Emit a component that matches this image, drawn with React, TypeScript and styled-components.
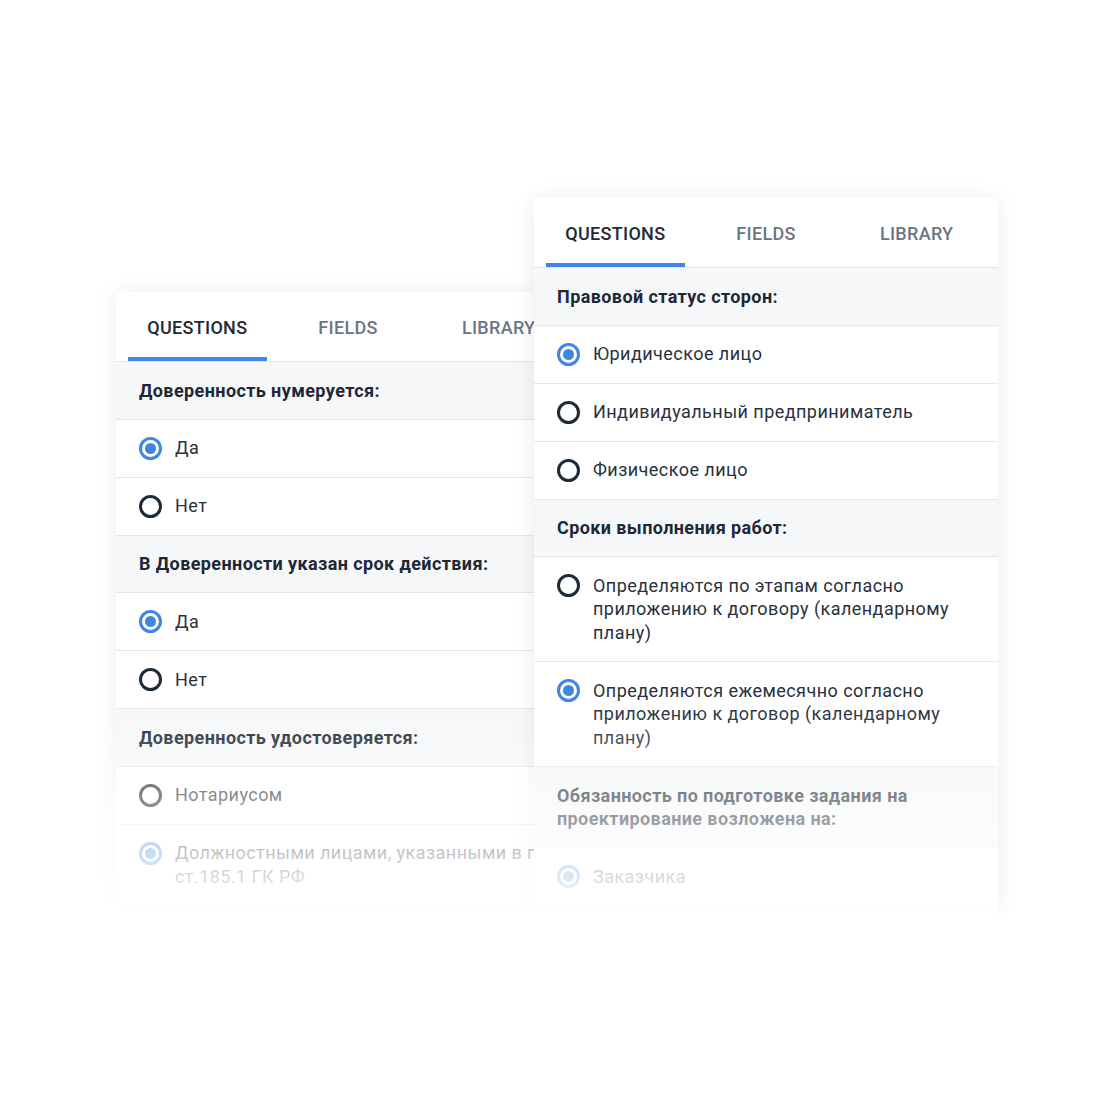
import React from 'react';
import styled, { createGlobalStyle } from 'styled-components';

const GlobalStyle = createGlobalStyle`
  body {
    margin: 0;
    background: #fff;
    font-family: Roboto, "Noto Sans", "Liberation Sans", sans-serif;
  }
`;

const Page = styled.div`
  width: 1120px;
  height: 1120px;
  overflow: hidden;
  background: #fff;
`;

const Stage = styled.div`
  position: relative;
  display: flex;
  align-items: flex-end;
  padding: 198px 0 0 116px;
  width: max-content;
`;

const Card = styled.div<{ $front?: boolean }>`
  width: 464px;
  background: #fff;
  border-radius: 4px;
  box-shadow: 0 2px 22px rgba(30, 40, 60, 0.09);
  position: relative;
  z-index: ${(p) => (p.$front ? 2 : 1)};
  margin-left: ${(p) => (p.$front ? '-46px' : '0')};
  overflow: hidden;
`;

const Tabs = styled.div`
  display: flex;
  gap: 12px;
  padding: 0 12px;
  height: 69px;
  border-bottom: 1px solid #e3e5e8;
`;

const Tab = styled.div<{ $active?: boolean }>`
  flex: 1;
  display: flex;
  align-items: center;
  justify-content: center;
  font-size: 18px;
  font-weight: 500;
  letter-spacing: 0.3px;
  color: ${(p) => (p.$active ? '#1e2a38' : '#6a7685')};
  border-bottom: 4px solid ${(p) => (p.$active ? '#3f86e0' : 'transparent')};
  padding-top: 5px;
  white-space: nowrap;
`;

const Header = styled.div`
  background: #f6f7f8;
  padding: 16.5px 23px 16.5px;
  font-size: 18px;
  font-weight: 700;
  line-height: 23.5px;
  letter-spacing: 0.4px;
  color: #1d2836;
  border-bottom: 1px solid #e3e5e8;
`;

const Row = styled.div`
  display: flex;
  align-items: flex-start;
  gap: 13px;
  padding: 16.5px 23px 17px;
  border-bottom: 1px solid #e6e8eb;
  font-size: 18px;
  line-height: 23.5px;
  color: #28313d;
  letter-spacing: 0.45px;
  white-space: nowrap;
`;

const RowText = styled.span<{ $wrap?: boolean; $width?: number }>`
  white-space: ${(p) => (p.$wrap ? 'normal' : 'nowrap')};
  width: ${(p) => (p.$width ? `${p.$width}px` : 'auto')};
  flex-shrink: ${(p) => (p.$width ? 0 : 1)};
`;

const Radio = styled.span<{ $checked?: boolean }>`
  flex: none;
  width: 23px;
  height: 23px;
  margin-top: 0.5px;
  box-sizing: border-box;
  border-radius: 50%;
  border: 3px solid ${(p) => (p.$checked ? '#3f86e0' : '#1f2a37')};
  display: flex;
  align-items: center;
  justify-content: center;
  &::after {
    content: '';
    width: 11px;
    height: 11px;
    border-radius: 50%;
    background: ${(p) => (p.$checked ? '#3f86e0' : 'transparent')};
  }
`;

const Fade = styled.div`
  position: absolute;
  left: 0;
  right: 0;
  bottom: -40px;
  height: 240px;
  z-index: 3;
  pointer-events: none;
  background: linear-gradient(
    to bottom,
    rgba(255, 255, 255, 0) 0%,
    rgba(255, 255, 255, 0.74) 64%,
    rgba(255, 255, 255, 0.9) 80%,
    #fff 86%,
    #fff 100%
  );
`;

type Item =
  | { kind: 'header'; text: string }
  | { kind: 'option'; text: string; checked?: boolean; wrap?: boolean };

const leftItems: Item[] = [
  { kind: 'header', text: 'Доверенность нумеруется:' },
  { kind: 'option', text: 'Да', checked: true },
  { kind: 'option', text: 'Нет' },
  { kind: 'header', text: 'В Доверенности указан срок действия:' },
  { kind: 'option', text: 'Да', checked: true },
  { kind: 'option', text: 'Нет' },
  { kind: 'header', text: 'Доверенность удостоверяется:' },
  { kind: 'option', text: 'Нотариусом' },
  {
    kind: 'option',
    text: 'Должностными лицами, указанными в п. 2 ст.185.1 ГК РФ',
    checked: true,
    wrap: true,
  },
];

const rightItems: Item[] = [
  { kind: 'header', text: 'Правовой статус сторон:' },
  { kind: 'option', text: 'Юридическое лицо', checked: true },
  { kind: 'option', text: 'Индивидуальный предприниматель' },
  { kind: 'option', text: 'Физическое лицо' },
  { kind: 'header', text: 'Сроки выполнения работ:' },
  {
    kind: 'option',
    text: 'Определяются по этапам согласно приложению к договору (календарному плану)',
    wrap: true,
  },
  {
    kind: 'option',
    text: 'Определяются ежемесячно согласно приложению к договор (календарному плану)',
    checked: true,
    wrap: true,
  },
  { kind: 'header', text: 'Обязанность по подготовке задания на проектирование возложена на:' },
  { kind: 'option', text: 'Заказчика', checked: true },
];

function Panel({ items, front }: { items: Item[]; front?: boolean }) {
  return (
    <Card $front={front}>
      <Tabs>
        <Tab $active>QUESTIONS</Tab>
        <Tab>FIELDS</Tab>
        <Tab>LIBRARY</Tab>
      </Tabs>
      {items.map((item, i) =>
        item.kind === 'header' ? (
          <Header key={i}>{item.text}</Header>
        ) : (
          <Row key={i}>
            <Radio $checked={item.checked} />
            <RowText $wrap={item.wrap} $width={item.wrap && !front ? 440 : undefined}>
              {item.text}
            </RowText>
          </Row>
        ),
      )}
    </Card>
  );
}

export default function App() {
  return (
    <Page>
      <GlobalStyle />
      <Stage>
        <Panel items={leftItems} />
        <Panel items={rightItems} front />
        <Fade />
      </Stage>
    </Page>
  );
}
